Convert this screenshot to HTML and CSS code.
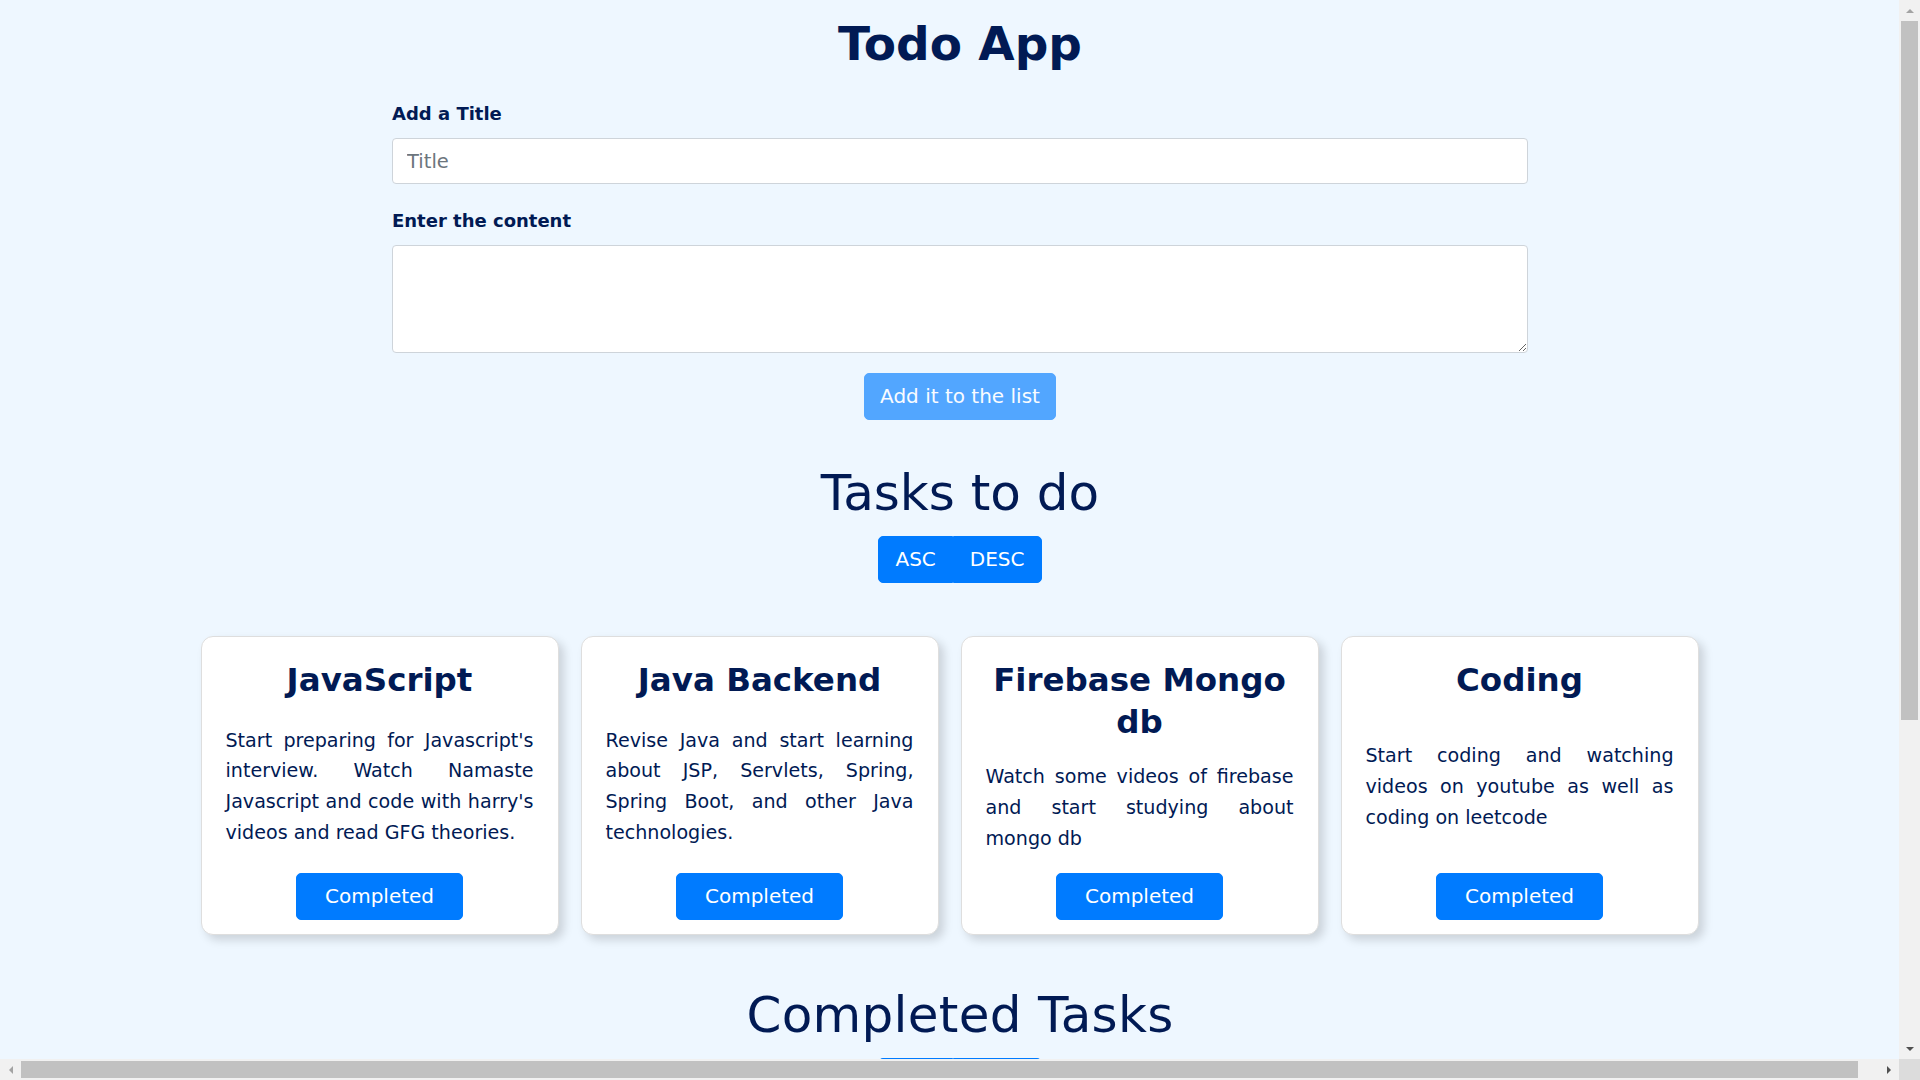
FILE: index.html
```html
<!DOCTYPE html>
<html lang="en">
<head>
<meta charset="utf-8">
<title>Todo App</title>
<link rel="stylesheet" href="styles.css">
</head>
<body>
<main class="page">
  <section class="band">
    <h1 class="app-title">Todo App</h1>
    <form class="todo-form">
      <label class="field-label" for="title">Add a Title</label>
      <input class="field-input" id="title" type="text" placeholder="Title">
      <label class="field-label" for="content">Enter the content</label>
      <textarea class="field-input field-area" id="content"></textarea>
      <button class="btn btn-add" type="button" disabled>Add it to the list</button>
    </form>
  </section>

  <section class="band">
    <h2 class="section-title">Tasks to do</h2>
    <div class="sort-group">
      <button class="btn" type="button">ASC</button>
      <button class="btn" type="button">DESC</button>
    </div>
  </section>

  <div class="card-row">
    <article class="card">
      <h3 class="card-title">JavaScript</h3>
      <p class="card-text">Start preparing for Javascript's interview. Watch Namaste Javascript and code with harry's videos and read GFG theories.</p>
      <button class="btn btn-complete" type="button">Completed</button>
    </article>
    <article class="card">
      <h3 class="card-title">Java Backend</h3>
      <p class="card-text">Revise Java and start learning about JSP, Servlets, Spring, Spring Boot, and other Java technologies.</p>
      <button class="btn btn-complete" type="button">Completed</button>
    </article>
    <article class="card">
      <h3 class="card-title">Firebase Mongo db</h3>
      <p class="card-text">Watch some videos of firebase and start studying about mongo db</p>
      <button class="btn btn-complete" type="button">Completed</button>
    </article>
    <article class="card">
      <h3 class="card-title">Coding</h3>
      <p class="card-text">Start coding and watching videos on youtube as well as coding on leetcode</p>
      <button class="btn btn-complete" type="button">Completed</button>
    </article>
  </div>

  <section class="band completed">
    <h2 class="section-title">Completed Tasks</h2>
    <div class="sort-group">
      <button class="btn" type="button">ASC</button>
      <button class="btn" type="button">DESC</button>
    </div>
  </section>
  <div class="card-row card-row-empty"></div>
</main>

<div class="scrollbar scrollbar-v" aria-hidden="true">
  <span class="sb-arrow sb-up"></span>
  <span class="sb-track"><span class="sb-thumb"></span></span>
  <span class="sb-arrow sb-down"></span>
</div>
<div class="scrollbar scrollbar-h" aria-hidden="true">
  <span class="sb-arrow sb-left"></span>
  <span class="sb-track"><span class="sb-thumb"></span></span>
  <span class="sb-arrow sb-right"></span>
</div>
<div class="scrollbar-corner" aria-hidden="true"></div>
</body>
</html>
```
FILE: styles.css
```css
* {
  box-sizing: border-box;
}

body {
  margin: 0;
  background: #eef7ff;
  color: #011a54;
  font-family: "DejaVu Sans", "Liberation Sans", sans-serif;
  overflow: hidden;
}

.page {
  width: calc(100vw - 21px);
  padding-top: 16px;
  padding-bottom: 80px;
}

.band {
  width: 100vw;
  display: flex;
  flex-direction: column;
  align-items: center;
}

.app-title {
  margin: 0;
  font-size: 47px;
  line-height: 56px;
  font-weight: 700;
}

.todo-form {
  width: 1136px;
  margin-top: 30px;
  display: flex;
  flex-direction: column;
}

.field-label {
  font-size: 18px;
  font-weight: 700;
  line-height: 24px;
  margin-bottom: 12px;
}

.field-input {
  height: 46px;
  padding: 0 14px;
  font-family: inherit;
  font-size: 19.5px;
  color: #495057;
  background: #fff;
  border: 1px solid #ced4da;
  border-radius: 4px;
  margin-bottom: 25px;
}

.field-input::placeholder {
  color: #6c757d;
}

.field-area {
  height: 108px;
  padding: 10px 14px;
  margin-bottom: 20px;
}

.btn {
  font-family: inherit;
  font-size: 20px;
  line-height: 27px;
  padding: 9px 16px;
  color: #fff;
  background: #007bff;
  border: 1px solid #007bff;
  border-radius: 5px;
}

.btn-add {
  align-self: center;
  padding: 9px 15px;
  opacity: 0.65;
}

.section-title {
  margin: 43px 0 13px;
  font-size: 50px;
  font-weight: 400;
  line-height: 60px;
}

.completed .section-title {
  margin-top: 50px;
  letter-spacing: 0.3px;
}

.sort-group {
  display: flex;
}

.sort-group .btn:first-child {
  border-radius: 5px 0 0 5px;
}

.sort-group .btn:last-child {
  border-radius: 0 5px 5px 0;
}

.card-row {
  display: flex;
  justify-content: center;
  gap: 22px;
  margin-top: 53px;
}

.card-row-empty {
  min-height: 300px;
}

.card {
  width: 358px;
  padding: 22px 24px 14px;
  background: #fff;
  border: 1px solid #dedede;
  border-radius: 12px;
  box-shadow: 5px 5px 10px rgba(0, 0, 0, 0.15);
  display: flex;
  flex-direction: column;
  justify-content: space-between;
}

.card-title {
  margin: 0;
  font-size: 32.5px;
  font-weight: 700;
  line-height: 42px;
  text-align: center;
}

.card-text {
  margin: 19px 0;
  font-size: 19.1px;
  line-height: 30.8px;
  text-align: justify;
}

.btn-complete {
  align-self: center;
  padding: 9px 28px;
}

/* classic browser scrollbars as seen in the capture */
.scrollbar {
  position: fixed;
  display: flex;
  background: #f1f1f1;
}

.scrollbar-v {
  top: 0;
  right: 0;
  width: 21px;
  height: calc(100vh - 21px);
  flex-direction: column;
}

.scrollbar-h {
  left: 0;
  bottom: 0;
  height: 21px;
  width: calc(100vw - 21px);
}

.scrollbar-corner {
  position: fixed;
  right: 0;
  bottom: 0;
  width: 21px;
  height: 21px;
  background: #dcdcdc;
}

.sb-arrow {
  flex: 0 0 21px;
  display: flex;
  align-items: center;
  justify-content: center;
}

.sb-arrow::before {
  content: "";
  width: 0;
  height: 0;
  border: 4px solid transparent;
}

.sb-up::before {
  border-bottom: 4px solid #a3a3a3;
  border-top-width: 0;
}

.sb-down::before {
  border-top: 4px solid #505050;
  border-bottom-width: 0;
}

.sb-left::before {
  border-right: 4px solid #a3a3a3;
  border-left-width: 0;
}

.sb-right::before {
  border-left: 4px solid #505050;
  border-right-width: 0;
}

.sb-track {
  flex: 1;
  display: flex;
}

.scrollbar-v .sb-track {
  flex-direction: column;
  padding: 0 2px;
}

.scrollbar-h .sb-track {
  padding: 2px 0;
}

.sb-thumb {
  background: #c1c1c1;
}

.scrollbar-v .sb-thumb {
  height: 699px;
}

.scrollbar-h .sb-thumb {
  width: 100%;
  margin-right: 20px;
}
```
